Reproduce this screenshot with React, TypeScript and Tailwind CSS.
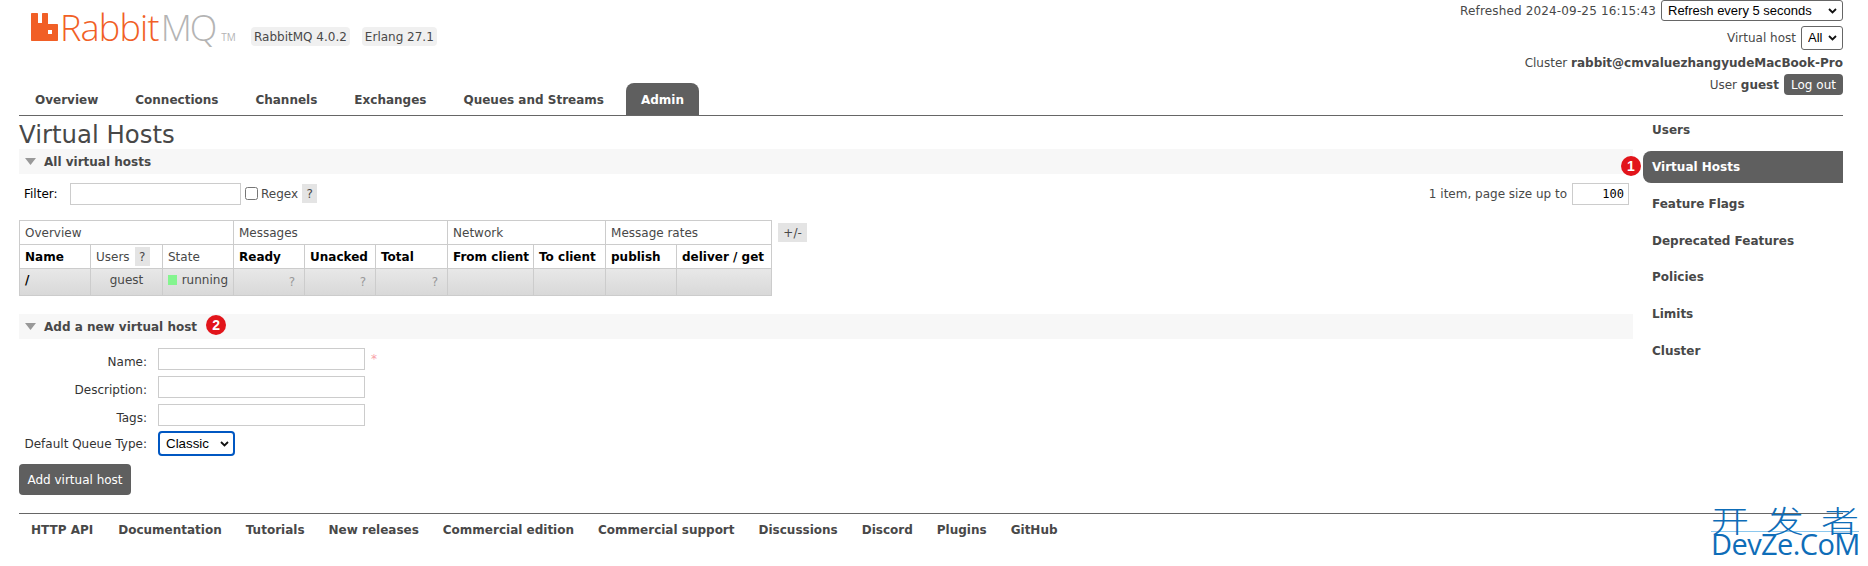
const tabs = ["Overview", "Connections", "Channels", "Exchanges", "Queues and Streams"];
const sideNav = ["Users", "Virtual Hosts", "Feature Flags", "Deprecated Features", "Policies", "Limits", "Cluster"];
const footerLinks = [
  "HTTP API",
  "Documentation",
  "Tutorials",
  "New releases",
  "Commercial edition",
  "Commercial support",
  "Discussions",
  "Discord",
  "Plugins",
  "GitHub",
];
const cols = [71, 72, 71, 71, 71, 72, 86, 72, 71, 95];

function Badge({ n }: { n: number }) {
  return (
    <span className="flex h-[20px] w-[20px] items-center justify-center rounded-full bg-[#e2151b] font-['Liberation_Sans',sans-serif] text-[14px] text-white">
      {n}
    </span>
  );
}

function SectionBar({ title, badge }: { title: string; badge?: number }) {
  return (
    <div className="flex h-[25px] items-center bg-[#f7f7f7] pl-[6px] font-bold">
      <svg width="11" height="7" viewBox="0 0 11 7" className="mr-[8px]">
        <path d="M0 0H11L5.5 7Z" fill="#999999" />
      </svg>
      <span>{title}</span>
      {badge && (
        <span className="-mt-[4px] ml-[9px]">
          <Badge n={badge} />
        </span>
      )}
    </div>
  );
}

function Help({ className = "" }: { className?: string }) {
  return (
    <span className={`inline-flex h-[19px] w-[15px] items-center justify-center bg-[#e4e4e4] font-normal ${className}`}>?</span>
  );
}

function Select({ label, className }: { label: string; className: string }) {
  return (
    <span className="relative inline-flex">
      <select className={`appearance-none font-['Liberation_Sans',sans-serif] text-black ${className}`}>
        <option>{label}</option>
      </select>
      <svg
        width="9"
        height="6"
        viewBox="0 0 9 6"
        className="pointer-events-none absolute top-1/2 right-[6px] -translate-y-1/2"
      >
        <path d="M1 1L4.5 4.5L8 1" fill="none" stroke="#111111" strokeWidth="1.8" />
      </svg>
    </span>
  );
}

function Logo() {
  return (
    <div className="flex w-[217px] items-start">
      <svg width="27" height="28" viewBox="0 0 27 28" className="mt-[13px] ml-[12px] shrink-0">
        <path
          d="M1 0H6C6.6 0 7 .4 7 1V10H11V1C11 .4 11.4 0 12 0H16C16.6 0 17 .4 17 1V11H26C26.6 11 27 11.4 27 12V27C27 27.6 26.6 28 26 28H1C.4 28 0 27.6 0 27V1C0 .4 .4 0 1 0ZM17 17V21H21V17Z"
          fill="#f15f26"
          fillRule="evenodd"
        />
      </svg>
      <span className="mt-[6px] ml-[2px] font-['Open_Sans',sans-serif] text-[36px] leading-[44px] font-light tracking-[-0.8px] text-[#f15f26]">
        Rabbit
      </span>
      <span className="mt-[6px] ml-[2px] font-['Open_Sans',sans-serif] text-[36px] leading-[44px] font-light tracking-[-2px] text-[#b4b4b4]">
        MQ
      </span>
      <span className="mt-[31px] ml-[6px] font-['Open_Sans',sans-serif] text-[10px] leading-[12px] text-[#b4b4b4]">TM</span>
    </div>
  );
}

const th = "h-[24px] border border-[#cccccc] px-[5px] text-left whitespace-nowrap";
const td = "h-[27px] border border-[#cccccc] px-[5px] whitespace-nowrap";

export default function App() {
  return (
    <div className="relative h-[566px] overflow-hidden bg-white pr-[25px] pl-[19px] font-['DejaVu_Sans',sans-serif] text-[12px] leading-[16px] text-[#484848]">
      <header className="flex h-[116px] justify-between border-b border-[#666666]">
        <div className="flex flex-col justify-between">
          <div className="flex items-start">
            <Logo />
            <span className="mt-[27px] ml-[15px] flex h-[19px] items-center rounded-[4px] bg-[#f0f0f0] px-[3px]">RabbitMQ 4.0.2</span>
            <span className="mt-[27px] ml-[12px] flex h-[19px] items-center rounded-[4px] bg-[#f0f0f0] px-[3px]">Erlang 27.1</span>
          </div>
          <nav className="ml-px flex gap-[7px]">
            {tabs.map((tab) => (
              <a key={tab} className="flex h-[32px] items-center px-[15px] pt-[2px] font-bold">
                {tab}
              </a>
            ))}
            <a className="flex h-[32px] items-center rounded-t-[8px] bg-[#5f5f5f] px-[15px] pt-[2px] font-bold text-white">Admin</a>
          </nav>
        </div>
        <div className="flex flex-col items-end">
          <div className="flex h-[21px] items-center gap-[5px]">
            <span className="tracking-[0.15px]">Refreshed 2024-09-25 16:15:43</span>
            <Select
              label="Refresh every 5 seconds"
              className="h-[21px] w-[182px] rounded-[3px] border border-[#666666] pl-[6px] text-[13px]"
            />
          </div>
          <div className="mt-[5px] flex h-[24px] items-center gap-[5px]">
            <span>Virtual host</span>
            <Select label="All" className="h-[24px] w-[42px] rounded-[3px] border border-[#666666] pl-[6px] text-[13px]" />
          </div>
          <div className="mt-[4px] h-[18px] leading-[18px]">
            Cluster <b>rabbit@cmvaluezhangyudeMacBook-Pro</b>
          </div>
          <div className="mt-[2px] flex h-[21px] items-center gap-[5px]">
            <span>
              User <b>guest</b>
            </span>
            <span className="flex h-[21px] w-[59px] items-center justify-center rounded-[4px] bg-[#5f5f5f] text-white">Log out</span>
          </div>
        </div>
      </header>

      <div className="flex gap-[10px]">
        <main className="min-w-0 flex-1">
          <h1 className="flex h-[33px] items-center pt-[5px] text-[24.4px] font-normal">Virtual Hosts</h1>
          <SectionBar title="All virtual hosts" />

          <div className="mt-[8px] flex h-[23px] items-center">
            <label className="ml-[5px] w-[46px] text-black">Filter:</label>
            <input className="h-[22px] w-[171px] border border-[#cccccc]" />
            <input type="checkbox" className="ml-[4px] h-[13px] w-[13px]" />
            <span className="mr-[4px] ml-[3px]">Regex</span>
            <Help />
            <span className="mr-[4px] ml-auto flex items-center gap-[5px]">
              1 item, page size up to
              <input
                readOnly
                value="100"
                className="h-[22px] w-[57px] border border-[#cccccc] pr-[4px] text-right font-['DejaVu_Sans_Mono',monospace] text-[12px] text-black"
              />
            </span>
          </div>

          <div className="mt-[15px] flex items-start">
            <table className="table-fixed border-collapse" style={{ width: 752 }}>
              <colgroup>
                {cols.map((w, i) => (
                  <col key={i} style={{ width: w }} />
                ))}
              </colgroup>
              <thead>
                <tr>
                  <th colSpan={3} className={`${th} font-normal`}>Overview</th>
                  <th colSpan={3} className={`${th} font-normal`}>Messages</th>
                  <th colSpan={2} className={`${th} font-normal`}>Network</th>
                  <th colSpan={2} className={`${th} font-normal`}>Message rates</th>
                </tr>
                <tr>
                  <th className={`${th} font-bold text-black`}>Name</th>
                  <th className={`${th} font-normal`}>
                    <span className="flex items-center gap-[5px]">Users <Help /></span>
                  </th>
                  <th className={`${th} font-normal`}>State</th>
                  <th className={`${th} font-bold text-black`}>Ready</th>
                  <th className={`${th} font-bold text-black`}>Unacked</th>
                  <th className={`${th} font-bold text-black`}>Total</th>
                  <th className={`${th} font-bold text-black`}>From client</th>
                  <th className={`${th} font-bold text-black`}>To client</th>
                  <th className={`${th} font-bold text-black`}>publish</th>
                  <th className={`${th} font-bold text-black`}>deliver / get</th>
                </tr>
              </thead>
              <tbody>
                <tr className="bg-gradient-to-b from-[#e8e8e8] to-[#d8d8d8]">
                  <td className={`${td} pb-[4px] font-bold text-black`}>/</td>
                  <td className={`${td} pb-[4px] text-center`}>guest</td>
                  <td className={`${td} pb-[4px]`}>
                    <span className="flex items-center gap-[5px]">
                      <span className="h-[10px] w-[10px] bg-[#84f58f]" />
                      running
                    </span>
                  </td>
                  <td className={`${td} pr-[9px] text-right text-[#999999]`}>?</td>
                  <td className={`${td} pr-[9px] text-right text-[#999999]`}>?</td>
                  <td className={`${td} pr-[9px] text-right text-[#999999]`}>?</td>
                  <td className={td} />
                  <td className={td} />
                  <td className={td} />
                  <td className={td} />
                </tr>
              </tbody>
            </table>
            <span className="mt-[3px] ml-[6px] flex h-[19px] w-[29px] items-center justify-center bg-[#e4e4e4]">+/-</span>
          </div>

          <div className="mt-[18px]">
            <SectionBar title="Add a new virtual host" badge={2} />
          </div>

          <form className="mt-[9px] text-black">
            <div className="flex h-[22px] items-center">
              <label className="w-[128px] pt-[5px] text-right text-[#333333]">Name:</label>
              <input className="ml-[11px] h-[22px] w-[207px] border border-[#cccccc]" />
              <span className="ml-[6px] text-[#f8a0a8]">*</span>
            </div>
            <div className="mt-[6px] flex h-[22px] items-center">
              <label className="w-[128px] pt-[5px] text-right text-[#333333]">Description:</label>
              <input className="ml-[11px] h-[22px] w-[207px] border border-[#cccccc]" />
            </div>
            <div className="mt-[6px] flex h-[22px] items-center">
              <label className="w-[128px] pt-[5px] text-right text-[#333333]">Tags:</label>
              <input className="ml-[11px] h-[22px] w-[207px] border border-[#cccccc]" />
            </div>
            <div className="mt-[5px] flex h-[25px] items-center">
              <label className="mr-[11px] w-[128px] text-right whitespace-nowrap text-[#333333]">Default Queue Type:</label>
              <Select label="Classic" className="h-[25px] w-[77px] rounded-[4px] border-2 border-[#0057c2] pl-[6px] text-[13.33px]" />
            </div>
            <button type="button" className="mt-[8px] flex h-[31px] w-[112px] items-center justify-center rounded-[4px] bg-[#5f5f5f] text-white">
              Add virtual host
            </button>
          </form>
        </main>

        <aside className="-mt-[2px] flex w-[200px] shrink-0 flex-col gap-[4.85px] font-bold">
          {sideNav.map((item) =>
            item === "Virtual Hosts" ? (
              <div key={item} className="relative flex h-[32px] items-center rounded-l-[8px] bg-[#5f5f5f] pl-[9px] text-white">
                {item}
                <span className="absolute top-[5px] -left-[22px]">
                  <Badge n={1} />
                </span>
              </div>
            ) : (
              <a key={item} className="flex h-[32px] items-center pl-[9px]">
                {item}
              </a>
            ),
          )}
        </aside>
      </div>

      <footer className="absolute top-[513px] right-[25px] left-[19px] flex h-[32px] items-center gap-[24px] border-t border-[#666666] pl-[12px] font-bold">
        {footerLinks.map((link) => (
          <a key={link} className="first:mr-[1px]">
            {link}
          </a>
        ))}
      </footer>

      {/* site watermark sits over the page */}
      <div className="absolute top-[501px] left-[1711px] w-[148px] text-center text-[#0e6db8]">
        <div className="flex h-[30px] justify-between font-['Noto_Sans_CJK_SC',sans-serif] text-[38px] leading-[30px] font-light">
          <span className="origin-bottom scale-y-[0.78]">开</span>
          <span className="origin-bottom scale-y-[0.78]">发</span>
          <span className="origin-bottom scale-y-[0.78]">者</span>
        </div>
        <div className="border-t border-[#8cc8ee] font-['Open_Sans',sans-serif] text-[29px] leading-[24px] tracking-[-0.6px]">DevZe.CoM</div>
      </div>
    </div>
  );
}
